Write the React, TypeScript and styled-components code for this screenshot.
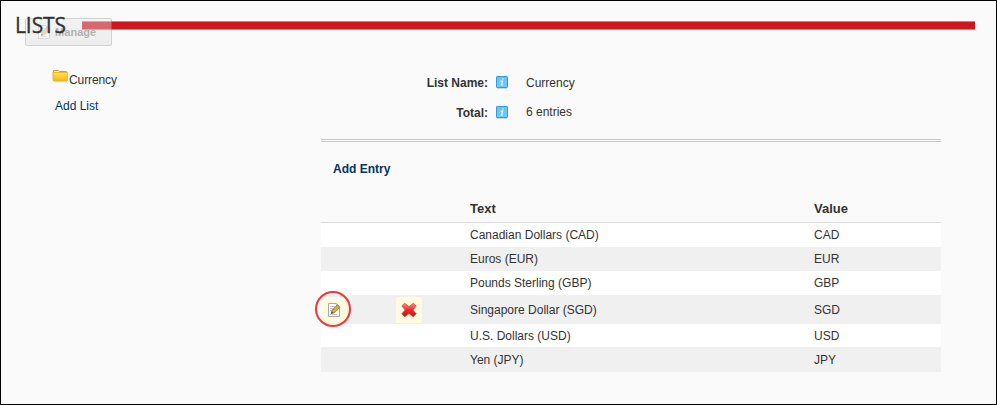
import React from "react";
import styled, { createGlobalStyle } from "styled-components";

const GlobalStyle = createGlobalStyle`
  * { box-sizing: border-box; }
  body {
    margin: 0;
    background: #fafafa;
    color: #333;
    font: 12px/16px "Liberation Sans", Arial, sans-serif;
  }
`;

const Page = styled.div`
  width: 997px;
  height: 405px;
  border: 1px solid #000;
  background: #fafafa;
  overflow: hidden;
`;

const Header = styled.header`
  position: relative;
  display: flex;
  align-items: center;
  height: 49px;
  padding: 0 21px 0 14px;
`;

const Title = styled.h1`
  position: relative;
  z-index: 1;
  width: 67px;
  margin: -2px 0 0;
  font: 400 21px/28px "Open Sans", sans-serif;
  letter-spacing: -0.1px;
  color: #333;
  -webkit-text-stroke: 0.3px #333;
  white-space: nowrap;
`;

const Rule = styled.div`
  flex: 1;
  height: 9px;
  background: #cf171f;
  border-top: 1px solid #e0787c;
  border-bottom: 1px solid #e87579;
`;

const ManageButton = styled.button`
  position: absolute;
  left: 24px;
  top: 17px;
  display: flex;
  align-items: center;
  gap: 3px;
  width: 87px;
  height: 28px;
  padding: 0 0 0 10px;
  border: 1px solid #999;
  border-radius: 2px;
  background: linear-gradient(#e8e8e8, #dcdcdc);
  color: #444;
  font: bold 11px/14px "Liberation Sans", Arial, sans-serif;
  letter-spacing: 0.05px;
  opacity: 0.4;
`;

const Body = styled.div`
  display: flex;
`;

const Sidebar = styled.nav`
  display: flex;
  flex-direction: column;
  width: 319px;
  padding: 19px 0 0 51px;
`;

const ListItem = styled.div`
  display: flex;
  height: 28px;
  svg { display: block; }
  span { padding-top: 3px; letter-spacing: -0.1px; }
`;

const Link = styled.a<{ $bold?: boolean }>`
  color: #003366;
  font-weight: ${(p) => (p.$bold ? "bold" : "normal")};
`;

const SideLink = styled(Link)`
  padding: 1px 0 0 3px;
`;

const Main = styled.main`
  width: 621px;
  padding-left: 1px;
`;

const Field = styled.div<{ $height: number }>`
  display: flex;
  align-items: flex-start;
  height: ${(p) => p.$height}px;
  svg { margin: 1px 18px 0 8px; }
`;

const Label = styled.span`
  width: 167px;
  text-align: right;
  font-weight: bold;
`;

const FieldValue = styled.span<{ $raise?: number }>`
  margin-top: -${(p) => p.$raise || 0}px;
`;

const Details = styled.section`
  height: 92px;
  padding-top: 25px;
  border-bottom: 3px double #c8c8c8;
`;

const Actions = styled.div`
  height: 49px;
  padding: 19px 0 0 12px;
`;

const Row = styled.div<{ $height: number; $striped?: boolean }>`
  display: grid;
  grid-template-columns: 75px 74px 344px 1fr;
  align-items: center;
  height: ${(p) => p.$height}px;
  background: ${(p) => (p.$striped ? "#f0f0f0" : "#fff")};
`;

const HeadRow = styled(Row)`
  background: transparent;
  border-bottom: 1px solid #ddd;
  font-weight: bold;
  font-size: 13px;
  padding-top: 4px;
`;

const IconCell = styled.span`
  position: relative;
  display: flex;
  align-items: center;
  justify-content: center;
  width: 26px;
  height: 26px;
  border-radius: 2px;
  background: #fefbe0;
`;

const EditCell = styled(IconCell)`
  border-radius: 6px;
`;

const Highlight = styled.i`
  position: absolute;
  left: -6px;
  top: -6px;
  width: 36px;
  height: 36px;
  border: 2px solid #f5353a;
  border-radius: 50%;
`;

const FolderIcon = () => (
  <svg width="17" height="16" viewBox="0 0 17 16">
    <defs>
      <linearGradient id="folder" x1="0" y1="0" x2="0" y2="1">
        <stop offset="0" stopColor="#ffe14f" />
        <stop offset="1" stopColor="#f9b90d" />
      </linearGradient>
    </defs>
    <path d="M1.5 1.5h5l1 1h7v3h-13z" fill="#fff0a8" stroke="#c9a13a" />
    <path d="M.8 3.5h14.8l-.3 8.2H1.2z" fill="url(#folder)" stroke="#e0ab24" strokeWidth=".8" />
    <path d="M2 12.7h13" stroke="#ccc" />
  </svg>
);

const InfoIcon = () => (
  <svg width="12" height="15" viewBox="0 0 12 15">
    <defs>
      <linearGradient id="info" x1="0" y1="0" x2="0" y2="1">
        <stop offset="0" stopColor="#70bfe9" />
        <stop offset="1" stopColor="#62d0fb" />
      </linearGradient>
    </defs>
    <path d="M1 12.5h10" stroke="#d4d4d4" />
    <rect x=".5" y=".5" width="11" height="11" rx=".6" fill="url(#info)" stroke="#369bd4" />
    <path d="M6.2 3h1.6M4.6 5.2h2l-1 3.6M4.6 9h2.3" fill="none" stroke="#f2fbff" strokeWidth="1.2" />
  </svg>
);

const EditIcon = () => (
  <svg width="16" height="16" viewBox="0 0 16 16">
    <path d="M2.5 1.5h8l3 3v10h-11z" fill="#fcfcfc" stroke="#aaa9a5" />
    <path d="M10.5 1.5v3h3M4 4.5h5M4 6.5h4M4 8.5h3M4 12.5h7" fill="none" stroke="#c3c6cd" />
    <path d="M5.2 11.5l1-3.3 5.2-5.4 2.5 2.4-5.3 5.4z" fill="#e2a93b" stroke="#8b662b" strokeWidth=".7" />
    <path d="M5 11.8l.7-2.4 1.7 1.6z" fill="#3e3932" />
  </svg>
);

const DeleteIcon = () => (
  <svg width="16" height="16" viewBox="0 0 16 16">
    <defs>
      <linearGradient id="cross" x1="0" y1="0" x2="0" y2="1">
        <stop offset="0" stopColor="#ff8b80" />
        <stop offset=".5" stopColor="#ee2b2b" />
        <stop offset="1" stopColor="#cc0910" />
      </linearGradient>
    </defs>
    <path
      d="M3.6 1.2L8 4.6l4.4-3.4 2.8 2.9L12 8l3.2 3.8-3 2.9L8 11.6l-4.2 3.1-3-2.9L4.2 8 .9 4z"
      fill="url(#cross)"
      stroke="#d33a38"
      strokeWidth=".7"
      strokeLinejoin="round"
    />
  </svg>
);

const entries = [
  { text: "Canadian Dollars (CAD)", value: "CAD", height: 24 },
  { text: "Euros (EUR)", value: "EUR", height: 24 },
  { text: "Pounds Sterling (GBP)", value: "GBP", height: 24 },
  { text: "Singapore Dollar (SGD)", value: "SGD", height: 29, active: true },
  { text: "U.S. Dollars (USD)", value: "USD", height: 23 },
  { text: "Yen (JPY)", value: "JPY", height: 25 },
];

export default function App() {
  return (
    <>
      <GlobalStyle />
      <Page>
        <Header>
          <Title>LISTS</Title>
          <Rule />
          <ManageButton>
            <EditIcon />
            Manage
          </ManageButton>
        </Header>
        <Body>
          <Sidebar>
            <ListItem>
              <FolderIcon />
              <span>Currency</span>
            </ListItem>
            <SideLink>Add List</SideLink>
          </Sidebar>
          <Main>
            <Details>
              <Field $height={30}>
                <Label>List Name:</Label>
                <InfoIcon />
                <FieldValue>Currency</FieldValue>
              </Field>
              <Field $height={30}>
                <Label>Total:</Label>
                <InfoIcon />
                <FieldValue $raise={1}>6 entries</FieldValue>
              </Field>
            </Details>
            <Actions>
              <Link $bold>Add Entry</Link>
            </Actions>
            <HeadRow $height={32}>
              <span />
              <span />
              <span>Text</span>
              <span>Value</span>
            </HeadRow>
            {entries.map((e, i) => (
              <Row key={e.value} $height={e.height} $striped={i % 2 === 1}>
                <span>
                  {e.active && (
                    <EditCell>
                      <EditIcon />
                      <Highlight />
                    </EditCell>
                  )}
                </span>
                <span>
                  {e.active && (
                    <IconCell>
                      <DeleteIcon />
                    </IconCell>
                  )}
                </span>
                <span>{e.text}</span>
                <span>{e.value}</span>
              </Row>
            ))}
          </Main>
        </Body>
      </Page>
    </>
  );
}
